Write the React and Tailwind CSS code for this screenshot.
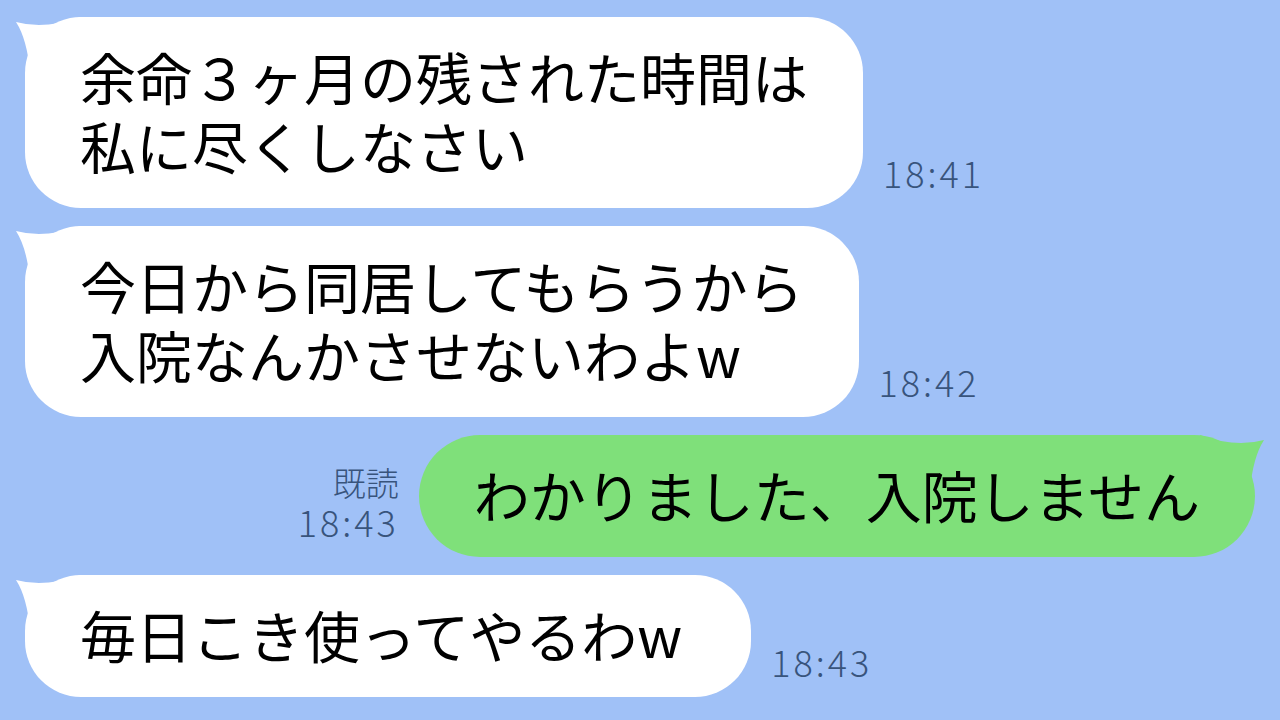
import React from 'react';

const messages = [
  { id: 1, from: 'them', lines: ['余命３ヶ月の残された時間は', '私に尽くしなさい'], time: '18:41' },
  { id: 2, from: 'them', lines: ['今日から同居してもらうから', '入院なんかさせないわよw'], time: '18:42' },
  { id: 3, from: 'me', lines: ['わかりました、入院しません'], time: '18:43', read: true },
  { id: 4, from: 'them', lines: ['毎日こき使ってやるわw'], time: '18:43', wide: true },
];

const font = { fontFamily: '"Noto Sans CJK JP", "Noto Sans", sans-serif' };

// Bubble tail, top-left for incoming messages
const TailLeft = () => (
  <svg className="absolute -left-[15px] top-0" width="70" height="60" viewBox="0 0 70 60">
    <path d="M6 5 Q35 13 70 0 L70 55 L20 55 Q17 22 6 5 Z" fill="#ffffff" />
  </svg>
);

// Bubble tail, top-right for my messages
const TailRight = () => (
  <svg className="absolute -right-[15px] top-0" width="70" height="60" viewBox="0 0 70 60">
    <path d="M64 5 Q35 13 0 0 L0 55 L50 55 Q53 22 64 5 Z" fill="#7fe07a" />
  </svg>
);

const Meta = ({ time, read, align }) => (
  <div className={`flex flex-col pb-[16px] text-[36px] leading-[39px] tracking-[3px] font-light text-[#38547c] ${align}`}>
    {read && <span className="text-[33px] tracking-normal">既読</span>}
    <span>{time}</span>
  </div>
);

const Bubble = ({ msg }) => {
  const mine = msg.from === 'me';
  return (
    <div
      className={`relative ${mine ? 'bg-[#7fe07a] rounded-[62px]' : 'bg-white rounded-[56px]'} pl-[55px] ${msg.wide ? 'pr-[69px]' : 'pr-[55px]'} pt-[24px] pb-[29px]`}
    >
      {mine ? <TailRight /> : <TailLeft />}
      <div className="relative text-[56px] leading-[69px] text-black whitespace-nowrap">
        {msg.lines.map((l, i) => (
          <div key={i}>{l}</div>
        ))}
      </div>
    </div>
  );
};

export default function App() {
  return (
    <div className="w-[1280px] h-[720px] overflow-hidden bg-[#a0c1f7] px-[25px] pt-[17px] flex flex-col gap-[18px]" style={font}>
      {messages.map((msg) =>
        msg.from === 'me' ? (
          <div key={msg.id} className="flex items-end justify-end gap-[20px]">
            <Meta time={msg.time} read={msg.read} align="items-end" />
            <Bubble msg={msg} />
          </div>
        ) : (
          <div key={msg.id} className="flex items-end gap-[20px]">
            <Bubble msg={msg} />
            <Meta time={msg.time} align="items-start" />
          </div>
        )
      )}
    </div>
  );
}
